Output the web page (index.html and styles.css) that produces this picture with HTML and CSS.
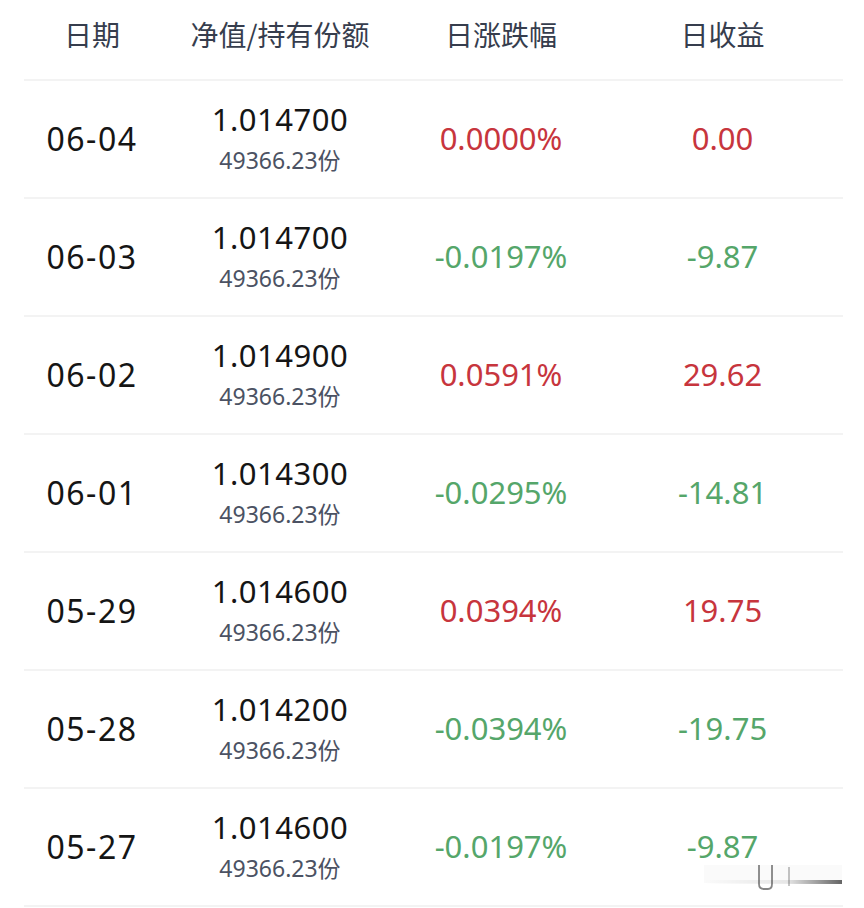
FILE: index.html
```html
<!DOCTYPE html>
<html lang="zh-CN">
<head>
    <meta charset="UTF-8">
    <meta name="viewport" content="width=device-width, initial-scale=1.0">
    <title>历史净值</title>
    <link rel="stylesheet" href="styles.css">
</head>
<body>
    <div class="nav-table">
        <!-- 表头 -->
        <div class="row head">
            <div>日期</div>
            <div>净值/持有份额</div>
            <div>日涨跌幅</div>
            <div>日收益</div>
        </div>

        <div class="row">
            <div class="date">06-04</div>
            <div class="nav"><span class="value">1.014700</span><span class="share">49366.23份</span></div>
            <div class="num up">0.0000%</div>
            <div class="num up">0.00</div>
        </div>
        <div class="row">
            <div class="date">06-03</div>
            <div class="nav"><span class="value">1.014700</span><span class="share">49366.23份</span></div>
            <div class="num down">-0.0197%</div>
            <div class="num down">-9.87</div>
        </div>
        <div class="row">
            <div class="date">06-02</div>
            <div class="nav"><span class="value">1.014900</span><span class="share">49366.23份</span></div>
            <div class="num up">0.0591%</div>
            <div class="num up">29.62</div>
        </div>
        <div class="row">
            <div class="date">06-01</div>
            <div class="nav"><span class="value">1.014300</span><span class="share">49366.23份</span></div>
            <div class="num down">-0.0295%</div>
            <div class="num down">-14.81</div>
        </div>
        <div class="row">
            <div class="date">05-29</div>
            <div class="nav"><span class="value">1.014600</span><span class="share">49366.23份</span></div>
            <div class="num up">0.0394%</div>
            <div class="num up">19.75</div>
        </div>
        <div class="row">
            <div class="date">05-28</div>
            <div class="nav"><span class="value">1.014200</span><span class="share">49366.23份</span></div>
            <div class="num down">-0.0394%</div>
            <div class="num down">-19.75</div>
        </div>
        <div class="row">
            <div class="date">05-27</div>
            <div class="nav"><span class="value">1.014600</span><span class="share">49366.23份</span></div>
            <div class="num down">-0.0197%</div>
            <div class="num down">-9.87</div>
        </div>
    </div>

    <!-- 底部的小滑块 -->
    <svg class="grip" width="142" height="30" viewBox="0 0 142 30">
        <defs>
            <linearGradient id="fade" x1="0" x2="1" y1="0" y2="0">
                <stop offset="0" stop-color="#000" stop-opacity="0"/>
                <stop offset="0.6" stop-color="#000" stop-opacity="0.08"/>
                <stop offset="1" stop-color="#000" stop-opacity="0.6"/>
            </linearGradient>
        </defs>
        <rect x="2" y="3" width="138" height="18" fill="#f6f6f6" opacity="0.6"/>
        <rect x="2" y="18" width="138" height="4" fill="url(#fade)"/>
        <path d="M57 3 V22 Q57 27 62 27 H66 Q70 27 70 22 V3" fill="none" stroke="#333" stroke-width="1.8" opacity="0.6"/>
        <line x1="87" y1="5" x2="87" y2="24" stroke="#555" stroke-width="1.5" opacity="0.45"/>
    </svg>
</body>
</html>
```

FILE: styles.css
```css
body {
    margin: 0;
    background-color: #fff;
    font-family: "Noto Sans", "Noto Sans CJK SC", sans-serif;
    position: relative;
}
.nav-table {
    margin-left: 24px;
    width: 819px;
}
.row {
    display: grid;
    grid-template-columns: 136px 240px 202px 241px;
    align-items: center;
    justify-items: center;
    height: 118px;
    border-bottom: 2px solid #f3f3f3;
    box-sizing: border-box;
}
.row.head {
    height: 81px;
    align-items: start;
    padding-top: 15px;
    font-family: "Noto Sans CJK SC", sans-serif;
    font-size: 28px;
    line-height: 38px;
    color: #363d4d;
}
.date {
    font-size: 32px;
    letter-spacing: 1.5px;
    color: #151515;
    margin-top: -2px;
}
.nav {
    display: flex;
    flex-direction: column;
    align-items: center;
    margin-top: -4px;
}
.nav .value {
    font-size: 31px;
    letter-spacing: 0.5px;
    line-height: 46px;
    color: #151515;
}
.nav .share {
    font-size: 23px;
    line-height: 36px;
    color: #4b5263;
}
.num {
    font-size: 31px;
    margin-top: -2px;
}
.up {
    color: #c7353d;
}
.down {
    color: #55a66a;
}
/* 右下角的滑块 */
.grip {
    position: absolute;
    left: 702px;
    top: 862px;
}
```
